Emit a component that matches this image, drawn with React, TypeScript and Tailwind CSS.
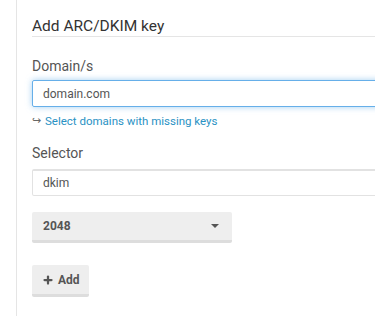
import { Plus } from 'lucide-react'

const App = () => {
  return (
    <div className="w-[375px] h-[316px] overflow-hidden bg-white" style={{ fontFamily: 'Roboto, "Liberation Sans", sans-serif' }}>
      <div className="ml-[16px] w-[440px] h-full border-l border-[#e5e5e5] pl-[15px] pt-[16px]">
        <h3 className="text-[15.5px] leading-[20px] text-[#333] border-b border-[#e5e5e5]">Add ARC/DKIM key</h3>

        <div className="mt-[21px]">
          <label className="block text-[14px] leading-[17px] text-[#555]">Domain/s</label>
          <div className="mt-[5px] h-[27px] flex items-center px-[10px] border border-[#66afe9] rounded-[2px] shadow-[0_0_6px_rgba(102,175,233,0.6)] text-[12px] text-[#555]">
            domain.com
          </div>
          <div className="mt-[6px] flex items-center gap-[4px] text-[11.5px] leading-[16px]">
            <span className="text-[#666] text-[11px]">↪</span>
            <span className="text-[#2a92c4]">Select domains with missing keys</span>
          </div>
        </div>

        <div className="mt-[16px]">
          <label className="block text-[14px] leading-[17px] text-[#555]">Selector</label>
          <div className="mt-[7px] h-[27px] flex items-center px-[10px] border border-[#e2e2e2] border-t-[2px] rounded-[2px] text-[12px] text-[#555]">
            dkim
          </div>
        </div>

        <div className="mt-[16px] w-[200px] h-[31px] flex items-center justify-between px-[11px] bg-[#eee] border-b-[3px] border-[#ddd] rounded-[2px] text-[12px] font-bold text-[#555]">
          <span>2048</span>
          <span className="w-0 h-0 border-l-[4px] border-r-[4px] border-t-[4px] border-l-transparent border-r-transparent border-t-[#555] mr-[2px]"></span>
        </div>

        <button className="mt-[22px] w-[57px] h-[32px] pl-[10px] flex items-center gap-[4px] bg-[#eee] border-b-[3px] border-[#ddd] rounded-[2px] text-[12px] font-bold text-[#555]">
          <Plus size={12} strokeWidth={4.5} />
          Add
        </button>
      </div>
    </div>
  )
}

export default App
